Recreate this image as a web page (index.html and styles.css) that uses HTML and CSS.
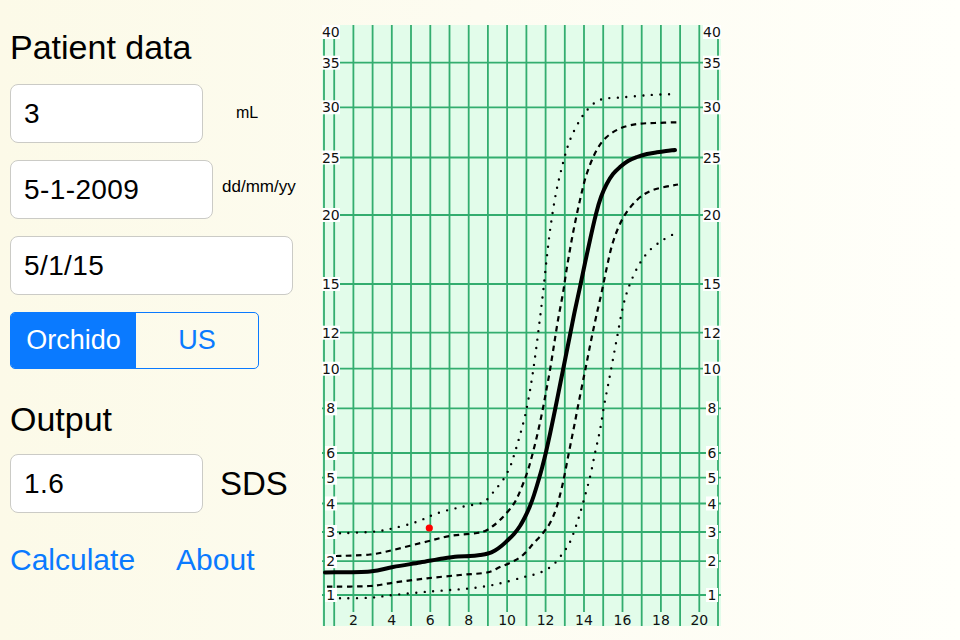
FILE: index.html
```html
<!DOCTYPE html>
<html lang="en">
<head>
    <meta charset="UTF-8">
    <meta name="viewport" content="width=device-width, initial-scale=1.0">
    <title>Orchidometer SDS</title>
    <link rel="stylesheet" href="styles.css">
</head>
<body>
    <div class="screen">
        <div class="form">
            <h1 class="heading">Patient data</h1>

            <div class="row">
                <input class="field field-short" type="text" value="3" readonly>
                <span class="unit unit-ml">mL</span>
            </div>

            <div class="row">
                <input class="field field-mid" type="text" value="5-1-2009" readonly>
                <span class="unit unit-date">dd/mm/yy</span>
            </div>

            <div class="row">
                <input class="field field-long" type="text" value="5/1/15" readonly>
            </div>

            <div class="segmented">
                <span class="segment active">Orchido</span>
                <span class="segment">US</span>
            </div>

            <h2 class="heading heading-output">Output</h2>

            <div class="row">
                <input class="field field-short" type="text" value="1.6" readonly>
                <span class="unit-big">SDS</span>
            </div>

            <div class="links">
                <a class="link" href="#">Calculate</a>
                <a class="link" href="#">About</a>
            </div>
        </div>

        <!-- growth chart: testis volume (mL) by age (years) -->
        <svg class="chart" width="400" height="602" viewBox="321 25 400 602">
            <rect class="paper" x="322" y="25" width="399" height="601"/>

            <path class="grid" d="M324 25V626 M334.2 25V626 M353.4 25V626 M372.6 25V626 M391.8 25V626 M411 25V626
                M430.3 25V626 M449.5 25V626 M468.7 25V626 M487.9 25V626 M507.1 25V626 M526.4 25V626
                M545.6 25V626 M564.8 25V626 M584 25V626 M603.2 25V626 M622.5 25V626 M641.7 25V626
                M660.9 25V626 M680.1 25V626 M699.3 25V626 M718 25V626"/>
            <path class="grid" d="M322 62.7H721 M322 107.3H721 M322 157.5H721 M322 215H721 M322 284H721
                M322 332.7H721 M322 368.7H721 M322 408.3H721 M322 453H721 M322 477.7H721
                M322 503.5H721 M322 532H721 M322 561.2H721 M322 595H721"/>

            <g class="axis axis-left">
                <rect x="322" y="25" width="18" height="14"/><text x="330.8" y="37">40</text>
                <rect x="322" y="55.7" width="18" height="14"/><text x="330.8" y="67.8">35</text>
                <rect x="322" y="100.3" width="18" height="14"/><text x="330.8" y="112.4">30</text>
                <rect x="322" y="150.5" width="18" height="14"/><text x="330.8" y="162.6">25</text>
                <rect x="322" y="208" width="18" height="14"/><text x="330.8" y="220.1">20</text>
                <rect x="322" y="277" width="18" height="14"/><text x="330.8" y="289.1">15</text>
                <rect x="322" y="325.7" width="18" height="14"/><text x="330.8" y="337.8">12</text>
                <rect x="322" y="361.7" width="18" height="14"/><text x="330.8" y="373.8">10</text>
                <rect x="325" y="401.3" width="12" height="14"/><text x="330.8" y="413.4">8</text>
                <rect x="325" y="446" width="12" height="14"/><text x="330.8" y="458.1">6</text>
                <rect x="325" y="470.7" width="12" height="14"/><text x="330.8" y="482.8">5</text>
                <rect x="325" y="496.5" width="12" height="14"/><text x="330.8" y="508.6">4</text>
                <rect x="325" y="525" width="12" height="14"/><text x="330.8" y="537.1">3</text>
                <rect x="325" y="554.2" width="12" height="14"/><text x="330.8" y="566.3">2</text>
                <rect x="325" y="588" width="12" height="14"/><text x="330.8" y="600.1">1</text>
            </g>

            <g class="axis axis-right">
                <rect x="703" y="25" width="18" height="14"/><text x="712" y="37">40</text>
                <rect x="703" y="55.7" width="18" height="14"/><text x="712" y="67.8">35</text>
                <rect x="703" y="100.3" width="18" height="14"/><text x="712" y="112.4">30</text>
                <rect x="703" y="150.5" width="18" height="14"/><text x="712" y="162.6">25</text>
                <rect x="703" y="208" width="18" height="14"/><text x="712" y="220.1">20</text>
                <rect x="703" y="277" width="18" height="14"/><text x="712" y="289.1">15</text>
                <rect x="703" y="325.7" width="18" height="14"/><text x="712" y="337.8">12</text>
                <rect x="703" y="361.7" width="18" height="14"/><text x="712" y="373.8">10</text>
                <rect x="706" y="401.3" width="12" height="14"/><text x="712" y="413.4">8</text>
                <rect x="706" y="446" width="12" height="14"/><text x="712" y="458.1">6</text>
                <rect x="706" y="470.7" width="12" height="14"/><text x="712" y="482.8">5</text>
                <rect x="706" y="496.5" width="12" height="14"/><text x="712" y="508.6">4</text>
                <rect x="706" y="525" width="12" height="14"/><text x="712" y="537.1">3</text>
                <rect x="706" y="554.2" width="12" height="14"/><text x="712" y="566.3">2</text>
                <rect x="706" y="588" width="12" height="14"/><text x="712" y="600.1">1</text>
            </g>

            <g class="axis axis-bottom">
                <rect x="347.4" y="612" width="12" height="14"/><text x="353.4" y="625">2</text>
                <rect x="385.8" y="612" width="12" height="14"/><text x="391.8" y="625">4</text>
                <rect x="424.3" y="612" width="12" height="14"/><text x="430.3" y="625">6</text>
                <rect x="462.7" y="612" width="12" height="14"/><text x="468.7" y="625">8</text>
                <rect x="497.6" y="612" width="19" height="14"/><text x="507.1" y="625">10</text>
                <rect x="536.1" y="612" width="19" height="14"/><text x="545.6" y="625">12</text>
                <rect x="574.5" y="612" width="19" height="14"/><text x="584" y="625">14</text>
                <rect x="613" y="612" width="19" height="14"/><text x="622.5" y="625">16</text>
                <rect x="651.4" y="612" width="19" height="14"/><text x="660.9" y="625">18</text>
                <rect x="689.8" y="612" width="19" height="14"/><text x="699.3" y="625">20</text>
            </g>

            <!-- +2 SD -->
            <polyline class="curve dotted" points="340,533.3 373,531.7 393,528.3 417,521.7 437,513.3 460,507.3 481.7,503 488,498.5 495,490 503,480 510,467 515,452 520,435 525,416 529,396 532.5,375 536,350 539.5,322 543,293 546.5,260 550.5,227 556,193 563,163 570,140 580,120 590,107 601.7,99.3 623,97.3 650,95 677,94"/>
            <!-- +1 SD -->
            <polyline class="curve dashed" points="336,556 370,554.5 393,550 427,541.5 450,536 477,533 485,531 493,526 503,517 513,505 518,496 523,484 528,470 532,456 537,436 542,413 546,392 550,370 554,345 558,320 563,293 567,267 573,233 580,200 587,173 596.7,150 606.7,137 620,128.5 637,124 655,123 677,122.3"/>
            <!-- median -->
            <polyline class="curve solid" points="325,572.5 370,571.5 393,567 420,562.5 443,558.5 458,556.5 470,556 480,555 488,553.5 495,550.5 502,545.5 508,540 514,534 520,526 525,517 530,506 534,495 538,482 542,468 546,452 550,434 555,410 560,385 565,360 570,335 575,310 580,287 585,263 590,240 596,214 601,197 606.7,184 613,174 620,167 628,161 637,157 647,154 657,152.3 666,151 675,150"/>
            <!-- -1 SD -->
            <polyline class="curve dashed" points="327,586.7 370,586 393,582.7 427,578.3 460,575 487,572.5 500,567 513,561.5 523,555 533,544 543,533 550,523 556.7,507 563.3,481 569,452 574,427 579,401 584,376 588,356 592,336 596.5,315 601.5,293 606.7,268 613,242 623,218 637,200 653,190 678,184.5"/>
            <!-- -2 SD -->
            <polyline class="curve dotted" points="340,598.3 370,597.7 393,595 427,591.7 460,589.3 483,586.7 503,582.7 525,576.7 540,572.7 553,565 563,553 570,542 576.7,524 583,503 590,477 595,453 600,430 604,406 608.5,383 613,359 617.5,335 622,311 626.7,293 632,279 640,263 650,250 663,240 678.3,231.7"/>

            <circle class="patient" cx="429.3" cy="528" r="3.6"/>
        </svg>
    </div>

    <script src="chart.js"></script>
</body>
</html>
```

FILE: styles.css
```css
:root {
    --ios-blue: #0a7aff;
    --field-border: #cbcbc6;
    --grid: #33ad6f;
    --paper: #e2fcea;
}

* {
    box-sizing: border-box;
    margin: 0;
    padding: 0;
}

body {
    font-family: 'Liberation Sans', Arial, sans-serif;
    color: #000;
    background: linear-gradient(to right, #fcfae8 0%, #fdfcf1 50%, #fffffa 100%);
    width: 960px;
    height: 640px;
    overflow: hidden;
}

.screen {
    display: flex;
    align-items: flex-start;
}

.form {
    flex-shrink: 0;
    width: 321px;
    padding: 27px 0 0 10px;
}

.heading {
    font-size: 34px;
    font-weight: 400;
    line-height: 40px;
    margin-bottom: 17px;
}

.heading-output {
    margin-top: 30px;
    margin-bottom: 15px;
}

.row {
    display: flex;
    align-items: center;
    margin-bottom: 17px;
}

.field {
    height: 59px;
    padding: 0 0 0 13px;
    border: 1px solid var(--field-border);
    border-radius: 8px;
    background: #fff;
    font-family: inherit;
    font-size: 28px;
    letter-spacing: 0.4px;
    color: #000;
    outline: none;
}

.field-short {
    width: 193px;
}

.field-mid {
    width: 203px;
}

.field-long {
    width: 283px;
}

.unit {
    font-size: 16px;
}

.unit-ml {
    margin-left: 33px;
    margin-top: -2px;
}

.unit-date {
    margin-left: 9px;
    margin-top: -5px;
    font-size: 17px;
}

.unit-big {
    margin-left: 17px;
    font-size: 33px;
}

.segmented {
    display: flex;
    width: 249px;
    height: 57px;
    border: 1px solid var(--ios-blue);
    border-radius: 5px;
    overflow: hidden;
}

.segment {
    flex: 1;
    display: flex;
    align-items: center;
    justify-content: center;
    font-size: 27px;
    color: var(--ios-blue);
}

.segment.active {
    flex: 0 0 125px;
    background: var(--ios-blue);
    color: #fff;
}

.links {
    display: flex;
    gap: 41px;
    margin-top: 29px;
}

.link {
    font-size: 30px;
    line-height: 36px;
    color: var(--ios-blue);
    text-decoration: none;
}

/* chart */
.chart {
    display: block;
    margin-top: 25px;
}

.paper {
    fill: var(--paper);
}

.grid {
    fill: none;
    stroke: var(--grid);
    stroke-width: 1.8;
}

.axis rect {
    fill: #fff;
}

.axis-bottom rect {
    fill: var(--paper);
}

.axis text {
    font-family: 'DejaVu Sans', sans-serif;
    font-size: 14px;
    fill: #111;
    text-anchor: middle;
}

.curve {
    fill: none;
    stroke: #000;
    stroke-linejoin: round;
}

.solid {
    stroke-width: 4;
    stroke-linecap: round;
}

.dashed {
    stroke-width: 2.2;
    stroke-dasharray: 5.5 4.5;
}

.dotted {
    stroke-width: 2.4;
    stroke-linecap: round;
    stroke-dasharray: 0 8.5;
}

.patient {
    fill: #ff0000;
}
```

FILE: chart.js
```js
// Turn the measured points of each percentile line into a smooth path
// (Catmull-Rom through the points, written as cubic Beziers)
document.querySelectorAll('polyline.curve').forEach(function (line) {
    const pts = line.getAttribute('points').trim().split(/\s+/).map(function (p) {
        return p.split(',').map(Number);
    });

    let d = 'M' + pts[0].join(',');
    for (let i = 0; i < pts.length - 1; i++) {
        const p0 = pts[i - 1] || pts[i];
        const p1 = pts[i];
        const p2 = pts[i + 1];
        const p3 = pts[i + 2] || p2;
        const c1 = [p1[0] + (p2[0] - p0[0]) / 6, p1[1] + (p2[1] - p0[1]) / 6];
        const c2 = [p2[0] - (p3[0] - p1[0]) / 6, p2[1] - (p3[1] - p1[1]) / 6];
        d += ' C' + c1.map(n => n.toFixed(1)).join(',') + ' ' +
            c2.map(n => n.toFixed(1)).join(',') + ' ' + p2.join(',');
    }

    const path = document.createElementNS('http://www.w3.org/2000/svg', 'path');
    path.setAttribute('d', d);
    path.setAttribute('class', line.getAttribute('class'));
    line.replaceWith(path);
});
```
